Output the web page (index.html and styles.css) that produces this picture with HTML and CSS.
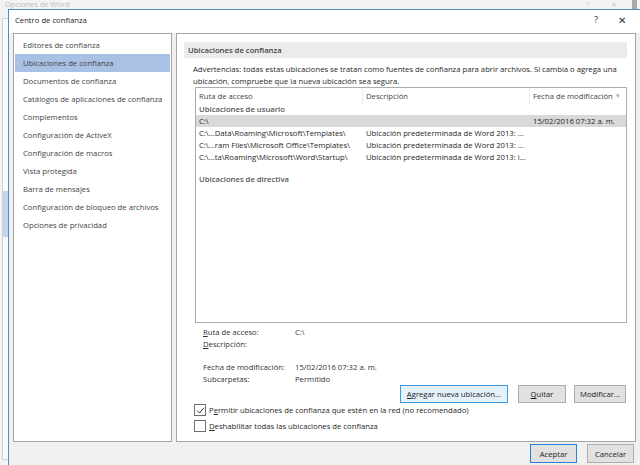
FILE: index.html
```html
<!DOCTYPE html>
<html lang="es">
<head>
  <meta charset="UTF-8" />
  <title>Centro de confianza</title>
  <link rel="stylesheet" href="styles.css">
</head>
<body>
  <div class="desk">
    <div class="back-title">Opciones de Word</div>
    <div class="back-ctl"><span>?</span><span>&#x2715;</span></div>
    <div class="back-scroll"></div>
    <div class="back-side"><div class="back-sel"></div></div>

    <div class="dialog">
      <div class="titlebar">
        <span class="title">Centro de confianza</span>
        <span class="ctl help">?</span>
        <span class="ctl close">&#x2715;</span>
      </div>

      <div class="body">
        <div class="panes">
          <ul class="nav">
            <li>Editores de confianza</li>
            <li class="active">Ubicaciones de confianza</li>
            <li>Documentos de confianza</li>
            <li>Catálogos de aplicaciones de confianza</li>
            <li>Complementos</li>
            <li>Configuración de ActiveX</li>
            <li>Configuración de macros</li>
            <li>Vista protegida</li>
            <li>Barra de mensajes</li>
            <li>Configuración de bloqueo de archivos</li>
            <li>Opciones de privacidad</li>
          </ul>

          <div class="main">
            <div class="section-head">Ubicaciones de confianza</div>
            <p class="warn">Advertencias: todas estas ubicaciones se tratan como fuentes de confianza para abrir archivos. Si cambia o agrega una ubicación, compruebe que la nueva ubicación sea segura.</p>

            <div class="list">
              <div class="list-head">
                <div class="col c1">Ruta de acceso</div>
                <div class="col c2">Descripción</div>
                <div class="col c3">Fecha de modificación <span class="sort">&#9662;</span></div>
              </div>
              <div class="group">Ubicaciones de usuario</div>
              <div class="row selected">
                <div class="col c1">C:\</div>
                <div class="col c2"></div>
                <div class="col c3">15/02/2016 07:32 a. m.</div>
              </div>
              <div class="row">
                <div class="col c1">C:\...Data\Roaming\Microsoft\Templates\</div>
                <div class="col c2">Ubicación predeterminada de Word 2013: ...</div>
                <div class="col c3"></div>
              </div>
              <div class="row">
                <div class="col c1">C:\...ram Files\Microsoft Office\Templates\</div>
                <div class="col c2">Ubicación predeterminada de Word 2013: ...</div>
                <div class="col c3"></div>
              </div>
              <div class="row">
                <div class="col c1">C:\...ta\Roaming\Microsoft\Word\Startup\</div>
                <div class="col c2">Ubicación predeterminada de Word 2013: i...</div>
                <div class="col c3"></div>
              </div>
              <div class="group policy">Ubicaciones de directiva</div>
            </div>

            <div class="details">
              <span><u>R</u>uta de acceso:</span><span>C:\</span>
              <span><u>D</u>escripción:</span><span></span>
              <span class="blank"></span><span class="blank"></span>
              <span>Fecha de modificación:</span><span>15/02/2016 07:32 a. m.</span>
              <span>Subcarpetas:</span><span>Permitido</span>
            </div>

            <div class="actions">
              <button class="btn focus"><u>A</u>gregar nueva ubicación...</button>
              <button class="btn quitar"><u>Q</u>uitar</button>
              <button class="btn modify">Modificar...</button>
            </div>

            <label class="check first">
              <span class="box">
                <svg width="9" height="9" viewBox="0 0 9 9"><path d="M1 4.6 L3.4 7 L8 1.8" fill="none" stroke="#333" stroke-width="1"/></svg>
              </span>
              <span>P<u>e</u>rmitir ubicaciones de confianza que estén en la red (no recomendado)</span>
            </label>
            <label class="check">
              <span class="box"></span>
              <span><u>D</u>eshabilitar todas las ubicaciones de confianza</span>
            </label>
          </div>
        </div>

        <div class="footer">
          <button class="btn wide default">Aceptar</button>
          <button class="btn wide">Cancelar</button>
        </div>
      </div>
    </div>
  </div>
</body>
</html>
```

FILE: styles.css
```css
body {
  margin: 0;
  font-family: 'Open Sans', 'Noto Sans', sans-serif;
  font-size: 7.7px;
  color: #262626;
  background: #f0f0f0;
  overflow: hidden;
}

.desk {
  position: relative;
  width: 640px;
  height: 465px;
  overflow: hidden;
  background: #f3f3f3;
}

.back-title {
  position: absolute;
  left: 5px;
  top: 0;
  font-size: 7.5px;
  line-height: 9px;
  color: #bdbdbd;
}

.back-ctl {
  position: absolute;
  left: 586px;
  top: 0;
  display: flex;
  gap: 22px;
  font-size: 7px;
  line-height: 9px;
  color: #c8c8c8;
}

.back-scroll {
  position: absolute;
  left: 632px;
  top: 0;
  width: 5px;
  height: 10px;
  background: #a9a9a9;
}

.back-side {
  position: absolute;
  left: 2px;
  top: 18px;
  width: 5px;
  height: 440px;
  background: #fafafa;
  border: 1px solid #d0d0d0;
}

.back-sel {
  margin-top: 172px;
  height: 46px;
  background: #c3d5ee;
}

.dialog {
  position: absolute;
  left: 8px;
  top: 9px;
  width: 640px;
  height: 470px;
  border-top: 1px solid #4a90c8;
  border-left: 1px solid #4a90c8;
  background: #f0f0f0;
  display: flex;
  flex-direction: column;
}

.titlebar {
  height: 23px;
  box-sizing: border-box;
  padding: 0 0 4px 6px;
  background: #fff;
  display: flex;
  align-items: center;
}

.title {
  flex: 1;
  color: #1e1e1e;
}

.ctl {
  font-size: 9px;
  color: #333;
  text-align: center;
  width: 12px;
}

.help {
  margin-right: 14px;
}

.close {
  margin-right: 21px;
  font-size: 10px;
}

.body {
  padding: 0 0 0 4px;
}

.panes {
  display: flex;
  gap: 4px;
  height: 409px;
}

.nav {
  list-style: none;
  margin: 0;
  padding: 2px 1px 0;
  width: 155px;
  background: #fff;
  border: 1px solid #a5a5a5;
  color: #444;
}

.nav li {
  height: 18px;
  line-height: 18px;
  padding-left: 8px;
  white-space: nowrap;
}

.nav li.active {
  background: #a9c1e4;
}

.main {
  width: 443px;
  background: #fff;
  border: 1px solid #a5a5a5;
  padding: 8px 8px 0 7px;
}

.section-head {
  height: 16px;
  line-height: 16px;
  background: #ebebeb;
  padding-left: 4px;
  color: #444;
  font-weight: 600;
}

.warn {
  margin: 5px 0 0 9px;
  line-height: 12px;
}

.list {
  margin-left: 11px;
  width: 430px;
  height: 234px;
  border: 1px solid #acacac;
}

.list-head,
.row {
  display: flex;
}

.list-head {
  height: 16px;
  line-height: 16px;
  color: #444;
}

.list-head .col {
  border-right: 1px solid #ececec;
}

.list-head .c3 {
  border-right: 0;
  position: relative;
}

.sort {
  position: absolute;
  right: 6px;
  color: #aaa;
  font-size: 7px;
}

.col {
  padding-left: 3px;
  white-space: nowrap;
  overflow: hidden;
  box-sizing: border-box;
}

.c1 { width: 167px; }
.c2 { width: 167px; }
.c3 { flex: 1; }

.group {
  height: 11px;
  line-height: 11px;
  padding-left: 3px;
  font-weight: 600;
  color: #555;
}

.group.policy {
  margin-top: 10px;
  height: 12px;
  line-height: 12px;
}

.row {
  height: 12px;
  line-height: 12px;
}

.row.selected {
  background: #d9d9d9;
}

.details {
  display: grid;
  grid-template-columns: 92px auto;
  margin: 3px 0 0 19px;
  line-height: 12px;
  color: #333;
}

.details .blank {
  height: 11px;
}

.actions {
  display: flex;
  justify-content: flex-end;
  gap: 8px;
  padding-right: 1px;
}

.btn {
  font-family: inherit;
  font-size: 7.7px;
  color: #222;
  height: 18px;
  padding: 0 4px;
  background: #e1e1e1;
  border: 1px solid #adadad;
  border-radius: 0;
}

.btn.focus {
  width: 108px;
  margin-right: 2px;
  background: #e5f1fb;
  border-color: #3c9ae0;
}

.btn.quitar {
  width: 48px;
}

.btn.modify {
  width: 52px;
}

.check {
  display: flex;
  align-items: center;
  gap: 3px;
  height: 16px;
  margin-left: 10px;
}

.check.first {
  margin-top: -1px;
}

.box {
  width: 10px;
  height: 10px;
  border: 1px solid #6f6f6f;
  background: #fff;
  display: flex;
  align-items: center;
  justify-content: center;
}

.footer {
  display: flex;
  gap: 10px;
  padding: 2px 0 0 517px;
}

.btn.wide {
  width: 47px;
  height: 19px;
}

.btn.default {
  border-color: #2a7fd4;
}
```
